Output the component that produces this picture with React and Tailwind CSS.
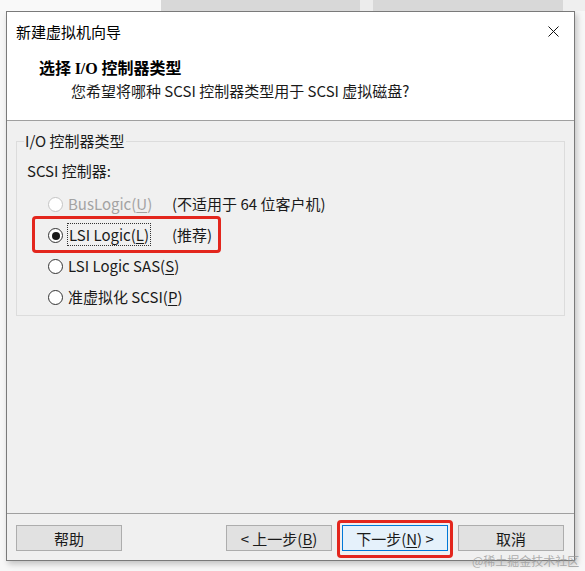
import React from 'react';

const font = { fontFamily: '"Noto Sans CJK SC", "Liberation Sans", sans-serif' };

function Radio({ checked, disabled }) {
  return (
    <span
      className={`flex h-[15px] w-[15px] shrink-0 items-center justify-center rounded-full border bg-white ${
        disabled ? 'border-[#c4c4c4] bg-[#f5f5f5]' : 'border-[#333333]'
      }`}
    >
      {checked && <span className="h-[8px] w-[8px] rounded-full bg-[#1a1a1a]" />}
    </span>
  );
}

function Btn({ children, primary }) {
  return (
    <div
      className={`flex h-[26px] w-[106px] items-center justify-center text-[15px] leading-none text-[#1a1a1a] ${
        primary ? 'border border-[#0078d7] bg-[#e5f1fb]' : 'border border-[#adadad] bg-[#e1e1e1]'
      }`}
    >
      {children}
    </div>
  );
}

export default function App() {
  return (
    <div className="relative h-[571px] w-[585px] overflow-hidden bg-[#f7f7f7]" style={font}>
      {/* windows behind */}
      <div className="flex h-[11px]">
        <div className="w-[161px] bg-[#f9f9f9]" />
        <div className="w-[199px] bg-[#d8d8d8]" />
        <div className="w-[13px] bg-[#ececec]" />
        <div className="w-[190px] bg-[#d8d8d8]" />
        <div className="flex-1 bg-[#efefef]" />
      </div>

      <div className="ml-[6px] flex h-[550px] w-[569px] flex-col border border-[#7a7a7a] bg-[#f0f0f0] shadow-[2px_3px_6px_rgba(0,0,0,0.22)]">
        {/* title + header */}
        <div className="h-[109px] border-b border-[#a0a0a0] bg-white">
          <div className="flex h-[38px] items-center justify-between pl-[9px] pr-[15px]">
            <span className="text-[15px] leading-none text-black">新建虚拟机向导</span>
            <svg width="11" height="11" viewBox="0 0 11 11" className="mt-[1px]">
              <path d="M0.5 0.5 L10.5 10.5 M10.5 0.5 L0.5 10.5" stroke="#111" strokeWidth="1" />
            </svg>
          </div>
          <div className="pt-[6px]">
            <div className="pl-[32px] text-[16px] font-bold leading-[22px] text-black">
              选择 <span style={{ fontFamily: '"Liberation Serif", serif' }}>I/O</span> 控制器类型
            </div>
            <div className="pl-[64px] text-[15px] leading-[22px] text-[#1a1a1a]">
              您希望将哪种 SCSI 控制器类型用于 SCSI 虚拟磁盘?
            </div>
          </div>
        </div>

        {/* body */}
        <div className="flex-1 border-b border-[#a0a0a0] pl-[9px] pr-[9px] pt-[10px]">
          <fieldset className="border border-[#dcdcdc] px-0 pb-[2px] text-[15px] text-[#1a1a1a]">
            <legend className="ml-[7px] px-[1px] leading-[20px]">I/O 控制器类型</legend>
            <div className="mt-[10px] pl-[10px] leading-[20px]">SCSI 控制器:</div>
            <div className="mt-[8px] pl-[31px]">
              <div className="flex h-[31px] items-center">
                <Radio disabled />
                <span className="ml-[5px] w-[104px] text-[#a3a3a3]">
                  BusLogic(<u className="underline-offset-2">U</u>)
                </span>
                <span>(不适用于 64 位客户机)</span>
              </div>
              <div className="relative flex h-[31px] items-center">
                <div className="absolute left-[-16px] top-[-4px] h-[37px] w-[189px] rounded-[4px] border-[3px] border-[#e3261d]" />
                <Radio checked />
                <span className="ml-[4px] w-[105px]">
                  <span className="border border-dotted border-[#333] px-[1px]">
                    LSI Logic(<u className="underline-offset-2">L</u>)
                  </span>
                </span>
                <span>(推荐)</span>
              </div>
              <div className="flex h-[31px] items-center">
                <Radio />
                <span className="ml-[5px]">
                  LSI Logic SAS(<u className="underline-offset-2">S</u>)
                </span>
              </div>
              <div className="flex h-[31px] items-center">
                <Radio />
                <span className="ml-[5px]">
                  准虚拟化 SCSI(<u className="underline-offset-2">P</u>)
                </span>
              </div>
            </div>
          </fieldset>
        </div>

        {/* buttons */}
        <div className="flex h-[46px] items-start pl-[9px] pr-[10px] pt-[11px]">
          <Btn>帮助</Btn>
          <div className="ml-auto flex gap-[10px]">
            <Btn>
              &lt; 上一步(<u className="underline-offset-2">B</u>)
            </Btn>
            <div className="relative">
              <div className="absolute left-[-5px] top-[-5px] h-[38px] w-[116px] rounded-[4px] border-[3px] border-[#e3261d]" />
              <Btn primary>
                下一步(<u className="underline-offset-2">N</u>) &gt;
              </Btn>
            </div>
            <Btn>取消</Btn>
          </div>
        </div>
      </div>

      <div className="absolute left-[472px] top-[553px] text-[12px] leading-[16px] text-[rgba(150,150,150,0.75)]">
        @稀土掘金技术社区
      </div>
    </div>
  );
}
